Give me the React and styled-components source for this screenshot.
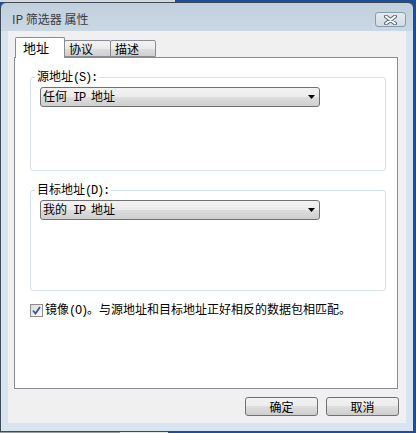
import React from 'react';
import styled, { createGlobalStyle } from 'styled-components';

const Global = createGlobalStyle`
  html, body { margin: 0; padding: 0; }
  body {
    font-family: "SimSun", "Noto Sans CJK SC", sans-serif;
    font-size: 12px;
    color: #000;
  }
`;

const Desktop = styled.div`
  width: 416px;
  height: 433px;
  box-sizing: border-box;
  padding-top: 2px;
  overflow: hidden;
  background:
    linear-gradient(to right, #d4d7dc 0 175px, #1b4d98 175px) top left / 100% 2px no-repeat,
    linear-gradient(to right, #9a9a9a 0 120px, #e6e6e6 120px 168px, #1b4d98 168px) bottom left / 100% 1px no-repeat,
    #1b4d98;
`;

const Window = styled.div`
  width: 414px;
  height: 430px;
  box-sizing: border-box;
  border: 1px solid #3f4a58;
  border-radius: 6px 6px 0 0;
  background: linear-gradient(#c2d0de, #cad7e4 28px, #d9e4f1 28px);
  display: flex;
  flex-direction: column;
`;

const TitleBar = styled.div`
  height: 28px;
  flex: none;
  display: flex;
  align-items: flex-start;
  padding: 0 7px 0 11px;
  box-sizing: border-box;
`;

const Title = styled.div`
  flex: 1;
  padding-top: 8px;
  font-family: "Microsoft YaHei", "Noto Sans CJK SC", sans-serif;
  font-size: 12px;
  line-height: 16px;
  color: #3c3c3c;
`;

const CloseButton = styled.div`
  margin-top: 9px;
  width: 31px;
  height: 15px;
  box-sizing: border-box;
  border: 1px solid #8b9aab;
  border-radius: 3px;
  background: linear-gradient(#e4eaf1, #d2dce7);
  display: flex;
  align-items: center;
  justify-content: center;
`;

const Client = styled.div`
  flex: 1;
  margin: 0 7px 8px 7px;
  background: #f0f0f0;
  display: flex;
  flex-direction: column;
  padding: 6px 8px 0 6px;
`;

const TabStrip = styled.div`
  height: 20px;
  display: flex;
  align-items: flex-end;
  padding-left: 1px;
`;

const Tab = styled.div`
  box-sizing: border-box;
  width: ${p => p.$w}px;
  height: ${p => (p.$active ? 21 : 17)}px;
  margin-bottom: ${p => (p.$active ? -1 : 0)}px;
  margin-left: ${p => (p.$first ? 0 : -1)}px;
  position: relative;
  z-index: ${p => (p.$active ? 1 : 0)};
  border: 1px solid #898c95;
  border-bottom: ${p => (p.$active ? 'none' : '1px solid #898c95')};
  border-radius: 2px 2px 0 0;
  background: ${p => (p.$active ? '#fff' : 'linear-gradient(#f3f3f3, #ebebeb 50%, #dddddd 50%, #cfcfcf)')};
  display: flex;
  align-items: ${p => (p.$active ? 'flex-start' : 'center')};
  padding-left: ${p => (p.$active ? 7 : 4)}px;
  padding-top: ${p => (p.$active ? 3 : 0)}px;
  font-size: ${p => (p.$active ? 13 : 12)}px;
  line-height: 14px;
`;

const Panel = styled.div`
  width: 384px;
  height: 332px;
  box-sizing: border-box;
  border: 1px solid #898c95;
  background: #fff;
  padding: 11px 11px 0 15px;
  display: flex;
  flex-direction: column;
`;

const Group = styled.fieldset`
  margin: ${p => p.$mt}px 0 0 0;
  padding: 2px 9px 0 9px;
  border: 1px solid #d5dfe5;
  border-radius: 3px;
  min-width: 0;
  height: ${p => p.$h}px;
  box-sizing: border-box;
`;

const Legend = styled.legend`
  padding: 0 2px;
  margin-left: -5px;
  line-height: 14px;
  font-size: 12px;
`;

const Lat = styled.span`
  font-family: "Liberation Mono", monospace;
  font-size: 12px;
  letter-spacing: -1.2px;
`;

const Combo = styled.div`
  width: 280px;
  height: 20px;
  box-sizing: border-box;
  border: 1px solid #707070;
  border-radius: 3px;
  background: linear-gradient(#f2f2f2, #ebebeb 50%, #dddddd 50%, #cfcfcf);
  display: flex;
  align-items: center;
  justify-content: space-between;
  padding: 0 4px 0 2px;
  font-size: 12px;
  line-height: 14px;
  white-space: pre;
`;

const CheckRow = styled.label`
  margin-top: 11px;
  display: flex;
  align-items: center;
  gap: 2px;
  font-size: 12px;
  line-height: 14px;
`;

const CheckBox = styled.span`
  width: 13px;
  height: 13px;
  box-sizing: border-box;
  border: 1px solid #8e8f8f;
  background: linear-gradient(135deg, #dcdcdc, #fbfbfb);
  display: flex;
  align-items: center;
  justify-content: center;
`;

const ButtonRow = styled.div`
  margin-top: 8px;
  margin-right: -1px;
  display: flex;
  justify-content: flex-end;
  gap: 8px;
`;

const Button = styled.div`
  width: 73px;
  height: 19px;
  box-sizing: border-box;
  border: 1px solid #707070;
  border-radius: 3px;
  background: linear-gradient(#f2f2f2, #ebebeb 50%, #dddddd 50%, #cfcfcf);
  display: flex;
  align-items: center;
  justify-content: center;
  font-size: 12px;
  line-height: 14px;
`;

const CloseGlyph = () => (
  <svg width="13" height="10" viewBox="0 0 13 10">
    <path d="M2 1.5 L11 8.5 M11 1.5 L2 8.5" stroke="#5f6a78" strokeWidth="4" strokeLinecap="round" />
    <path d="M2 1.5 L11 8.5 M11 1.5 L2 8.5" stroke="#fff" strokeWidth="2" strokeLinecap="round" />
  </svg>
);

const Arrow = () => (
  <svg width="7" height="4" viewBox="0 0 7 4">
    <polygon points="0,0 7,0 3.5,4" fill="#000" />
  </svg>
);

const Check = () => (
  <svg width="9" height="9" viewBox="0 0 9 9">
    <path d="M1 4.5 L3.5 7.5 L8 1" stroke="#3b56a4" strokeWidth="1.8" fill="none" />
  </svg>
);

export default function App() {
  return (
    <>
      <Global />
      <Desktop>
        <Window>
          <TitleBar>
            <Title>IP 筛选器 属性</Title>
            <CloseButton><CloseGlyph /></CloseButton>
          </TitleBar>
          <Client>
            <TabStrip>
              <Tab $active $first $w={50}>地址</Tab>
              <Tab $w={47}>协议</Tab>
              <Tab $w={46}>描述</Tab>
            </TabStrip>
            <Panel>
              <Group $h={102} $mt={0}>
                <Legend>源地址<Lat>(S):</Lat></Legend>
                <Combo><span>任何<Lat> IP </Lat>地址</span><Arrow /></Combo>
              </Group>
              <Group $h={109} $mt={11}>
                <Legend>目标地址<Lat>(D):</Lat></Legend>
                <Combo><span>我的<Lat> IP </Lat>地址</span><Arrow /></Combo>
              </Group>
              <CheckRow>
                <CheckBox><Check /></CheckBox>
                <span>镜像<Lat>(O)</Lat>。与源地址和目标地址正好相反的数据包相匹配。</span>
              </CheckRow>
            </Panel>
            <ButtonRow>
              <Button>确定</Button>
              <Button>取消</Button>
            </ButtonRow>
          </Client>
        </Window>
      </Desktop>
    </>
  );
}
